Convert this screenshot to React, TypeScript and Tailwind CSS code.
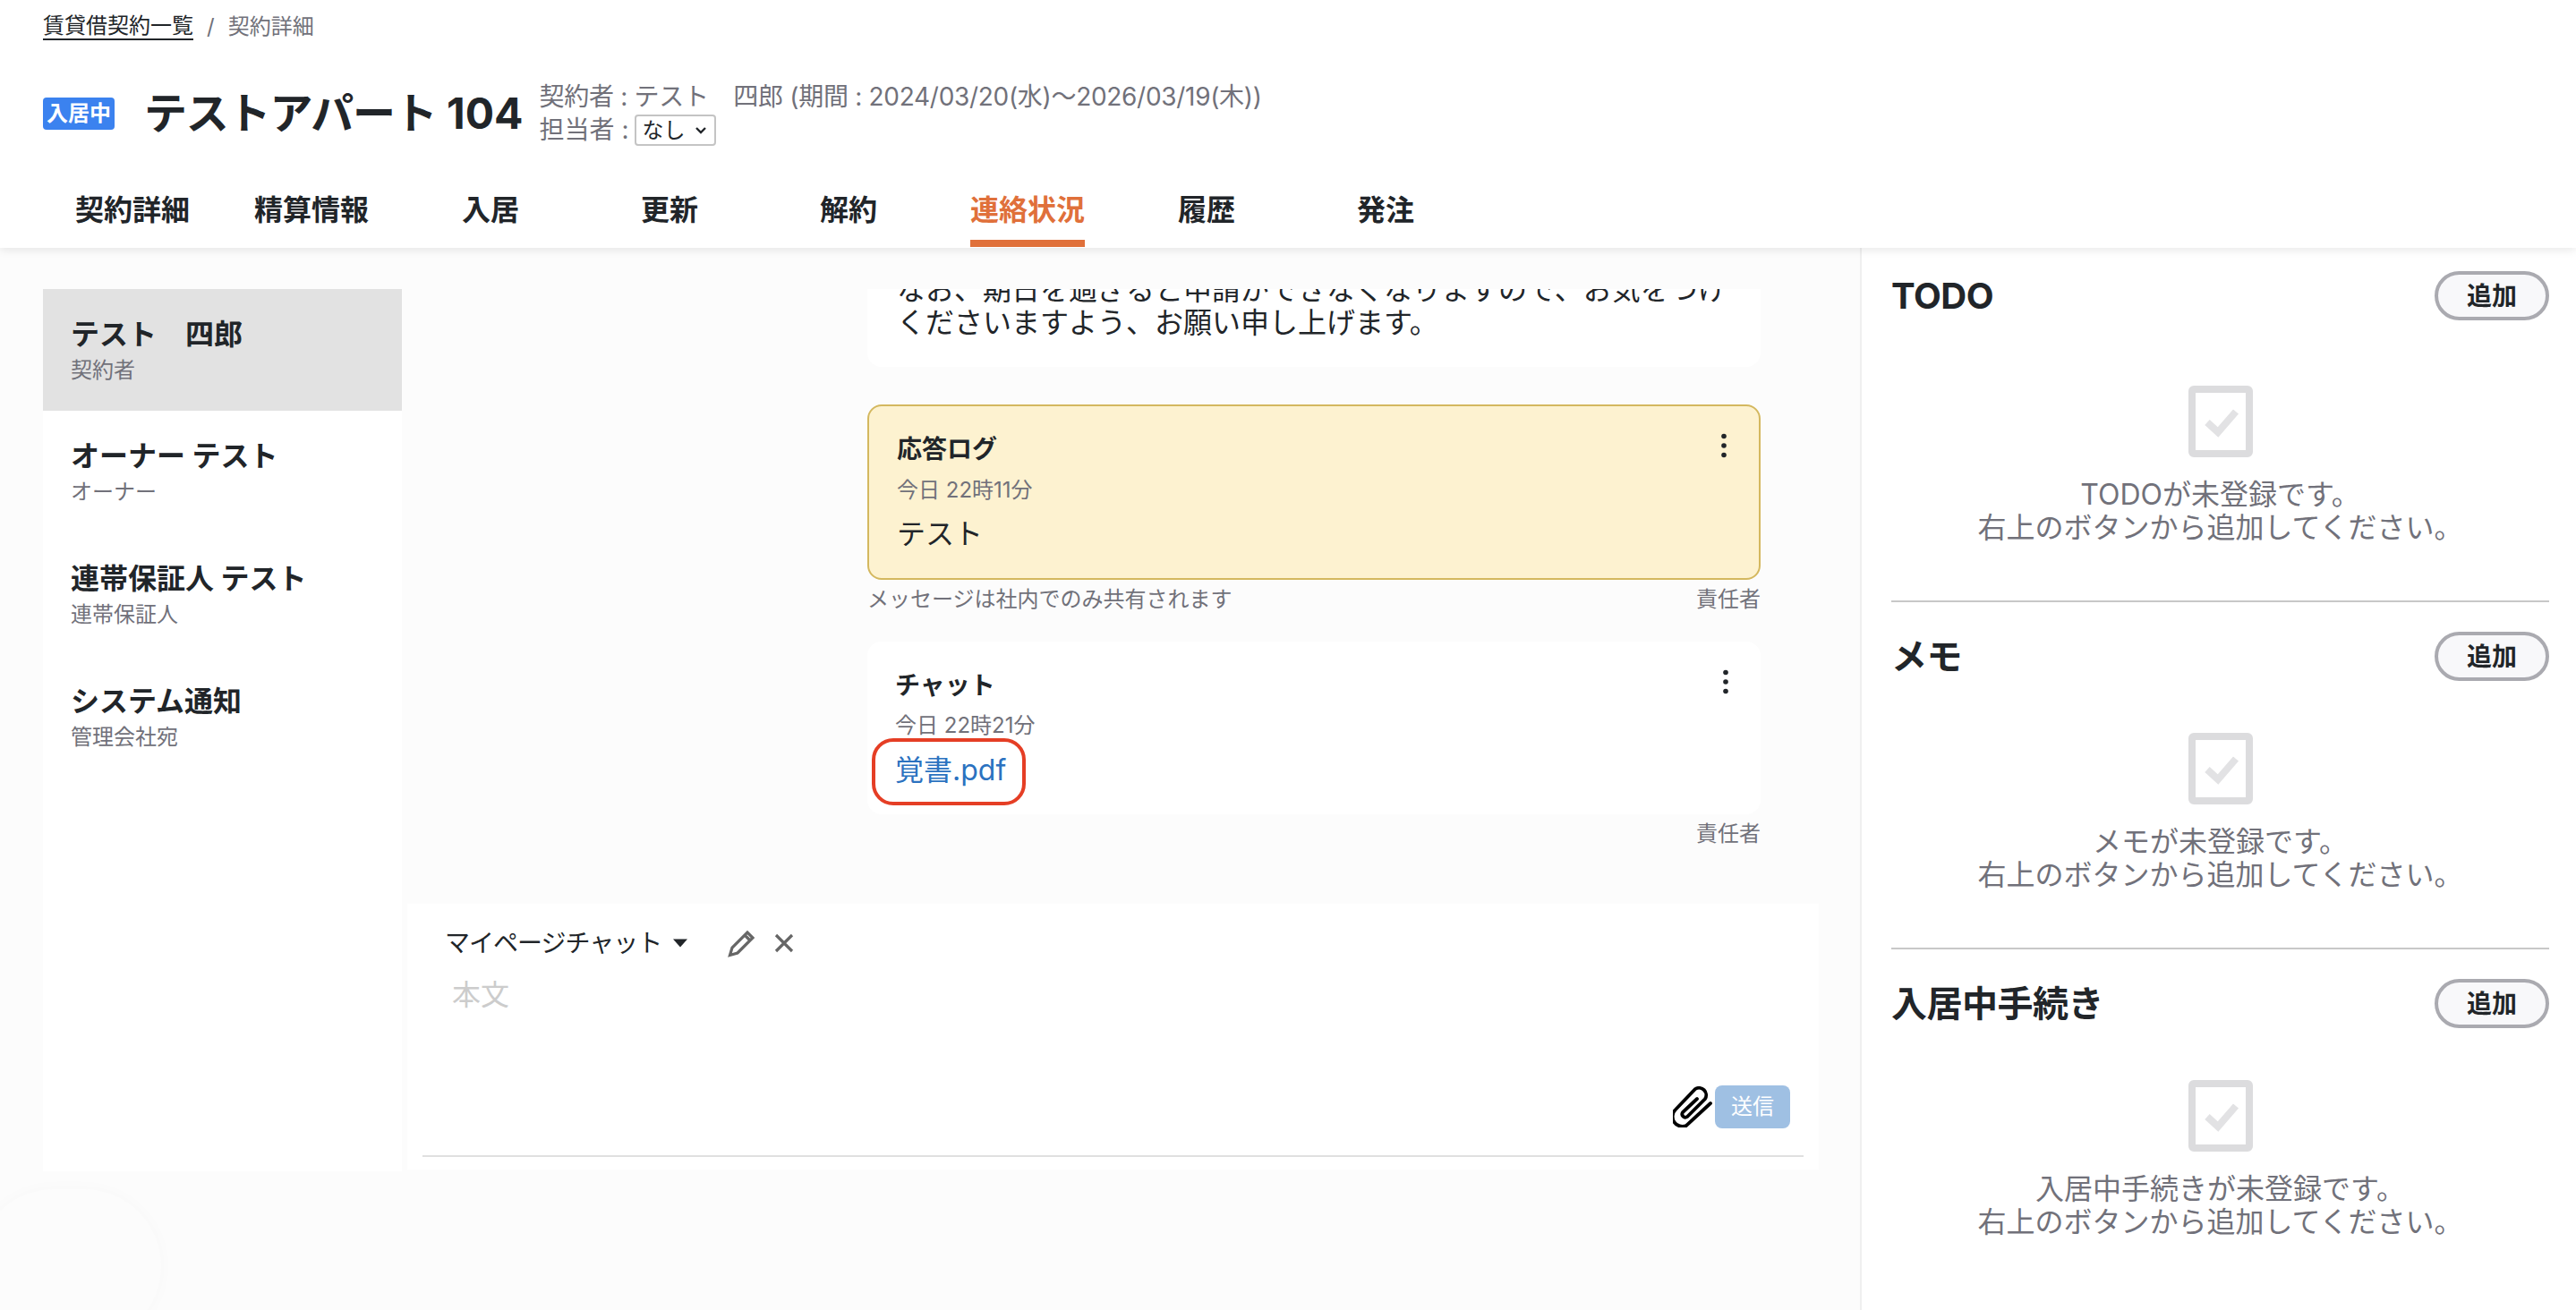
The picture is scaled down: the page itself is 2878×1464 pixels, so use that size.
import React from "react";

const tabs = ["契約詳細", "精算情報", "入居", "更新", "解約", "連絡状況", "履歴", "発注"];
const people = [
  ["テスト　四郎", "契約者"],
  ["オーナー テスト", "オーナー"],
  ["連帯保証人 テスト", "連帯保証人"],
  ["システム通知", "管理会社宛"],
];

function Dots() {
  return (
    <svg width="8" height="28" viewBox="0 0 8 28" className="text-[#212529]">
      <circle cx="4" cy="3.5" r="2.8" fill="currentColor" />
      <circle cx="4" cy="14" r="2.8" fill="currentColor" />
      <circle cx="4" cy="24.5" r="2.8" fill="currentColor" />
    </svg>
  );
}

function EmptyIcon() {
  return (
    <svg width="72" height="80" viewBox="0 0 72 80" className="block">
      <rect x="4" y="4" width="64" height="72" rx="2" fill="none" stroke="#dcdcde" strokeWidth="8" />
      <path d="M21 41 L33 52 L53 29" fill="none" stroke="#e2e2e4" strokeWidth="8" />
    </svg>
  );
}

function Section({ title, first, last }: { title: string; first?: boolean; last?: boolean }) {
  return (
    <section className={first ? "pt-[26px]" : "pt-[33px]"}>
      <div className="flex h-[55px] items-center justify-between">
        <h2 className="text-[40px] leading-[48px] font-bold tracking-[-0.5px] text-[#212529]">{title}</h2>
        <button className="h-[55px] w-[128px] rounded-full border-4 border-[#aaaab0] bg-[#f8f8fa] text-[28px] leading-[34px] font-bold text-[#212529]">
          追加
        </button>
      </div>
      <div className={`flex flex-col items-center ${first ? "pt-[73px]" : "pt-[58px]"} ${last ? "" : "pb-[63px]"}`}>
        <EmptyIcon />
        <p className="mt-[23px] text-center text-[32px] leading-[37px] text-[#71717a]">
          {title}が未登録です。
          <br />
          右上のボタンから追加してください。
        </p>
      </div>
      {!last && <div className="h-[2px] bg-[#c8c8c8]" />}
    </section>
  );
}

export default function App() {
  return (
    <div className="relative flex h-[1464px] flex-col overflow-hidden bg-[#fcfcfc] text-[#212529] [font-family:'Inter','Noto_Sans_CJK_JP',sans-serif]">
      <header className="relative z-10 h-[277px] shrink-0 bg-white pl-[48px] pt-[13px] shadow-[0_2px_10px_rgba(0,0,0,0.1)]">
        <nav className="flex items-center text-[24px] leading-[34px]">
          <a className="border-b-2 border-[#212529] leading-[28px]">賃貸借契約一覧</a>
          <span className="mx-[15px] text-[#71717a]">/</span>
          <span className="text-[#71717a]">契約詳細</span>
        </nav>
        <div className="mt-[43px] flex h-[74px] items-center">
          <span className="rounded-[4px] bg-[#3b82ef] px-[4px] text-[24px] leading-[36px] font-bold text-white">入居中</span>
          <h1 className="ml-[33px] text-[48px] leading-[60px] font-bold whitespace-nowrap">
            <span className="tracking-[-1.2px]">テストアパート</span> 104
          </h1>
          <div className="ml-[18px] text-[28px] leading-[37px] text-[#71717a]">
            <div className="tracking-[-0.3px]">契約者 : テスト　四郎 (期間 : 2024/03/20(水)〜2026/03/19(木))</div>
            <div className="flex items-center">
              担当者 :
              <div className="relative ml-[6px]">
                <select className="block h-[35px] w-[91px] appearance-none rounded-[4px] border-2 border-[#c4c4c4] bg-white pl-[7px] text-[24px] leading-[28px] text-[#212529]">
                  <option>なし</option>
                </select>
                <svg width="14" height="10" viewBox="0 0 14 10" className="pointer-events-none absolute right-[10px] top-[13px]">
                  <path d="M2 2 L7 7 L12 2" fill="none" stroke="#212529" strokeWidth="2.4" />
                </svg>
              </div>
            </div>
          </div>
        </div>
        <div className="mt-[48px] flex">
          {tabs.map((t) => (
            <div key={t} className="flex w-[200px] justify-center">
              <span
                className={
                  t === "連絡状況"
                    ? "border-b-8 border-[#e0703a] pb-[10px] text-[32px] leading-[46px] font-bold text-[#e0703a]"
                    : "pb-[18px] text-[32px] leading-[46px] font-bold"
                }
              >
                {t}
              </span>
            </div>
          ))}
        </div>
      </header>

      <main className="flex min-h-0 flex-1">
        <aside className="ml-[48px] mt-[46px] h-[986px] w-[401px] shrink-0 bg-white">
          {people.map(([name, sub], i) => (
            <div key={name} className={`pl-[31px] pt-[31px] ${i === 0 ? "h-[136px] bg-[#e2e2e2]" : "h-[137px]"}`}>
              <div className="text-[32px] leading-[40px] font-bold whitespace-pre">{name}</div>
              <div className="mt-[3px] text-[24px] leading-[34px] text-[#71717a]">{sub}</div>
            </div>
          ))}
        </aside>

        <div className="ml-[6px] w-[1577px] shrink-0">
          <div className="mt-[46px] flex h-[687px] flex-col justify-end overflow-hidden pl-[514px] pr-[65px] pb-[61px]">
            <div className="shrink-0 rounded-[16px] bg-white pb-[31px] pl-[33px] pr-[30px] text-[32px] leading-[37px]">
              なお、期日を過ぎると申請ができなくなりますので、お気をつけくださいますよう、お願い申し上げます。
            </div>
            <div className="mt-[42px] h-[196px] shrink-0 rounded-[16px] border-2 border-[#d4b85f] bg-[#fdf2d0] pl-[31px] pr-[35px] pt-[30px]">
              <div className="flex justify-between">
                <div className="text-[28px] leading-[36px] font-bold">応答ログ</div>
                <Dots />
              </div>
              <div className="mt-[10px] text-[24px] leading-[36px] text-[#71717a]">今日 22時11分</div>
              <div className="mt-[12px] text-[32px] leading-[37px]">テスト</div>
            </div>
            <div className="flex justify-between pt-[5px] text-[24px] leading-[34px] text-[#71717a]">
              <span>メッセージは社内でのみ共有されます</span>
              <span>責任者</span>
            </div>
            <div className="relative mt-[30px] h-[193px] shrink-0 rounded-[16px] bg-white pl-[31px] pr-[35px] pt-[31px]">
              <div className="flex justify-between">
                <div className="text-[28px] leading-[36px] font-bold">チャット</div>
                <Dots />
              </div>
              <div className="mt-[9px] text-[24px] leading-[36px] text-[#71717a]">今日 22時21分</div>
              <a className="mt-[13px] block text-[32px] leading-[37px] text-[#2b72c0]">覚書.pdf</a>
              <div className="absolute left-[5px] top-[108px] h-[75px] w-[172px] rounded-[24px] border-4 border-[#e53e25]" />
            </div>
            <div className="flex justify-end pt-[5px] text-[24px] leading-[34px] text-[#71717a]">
              <span>責任者</span>
            </div>
          </div>

          <div className="h-[297px] bg-white pt-[24px]">
            <div className="flex h-[40px] items-center pl-[42px]">
              <span className="text-[28px] leading-[40px] tracking-[-1px]">マイページチャット</span>
              <svg width="16" height="10" viewBox="0 0 16 10" className="ml-[13px] text-[#212529]">
                <path d="M0 0.5 H16 L8 9.5 Z" fill="currentColor" />
              </svg>
              <svg width="32" height="32" viewBox="0 0 32 32" className="ml-[45px]">
                <path d="M2.5 29.5 L5 21 L22 4 L28 10 L11 27 Z M19 7 L25 13" fill="none" stroke="#666666" strokeWidth="3.2" strokeLinejoin="miter" />
              </svg>
              <svg width="24" height="24" viewBox="0 0 24 24" className="ml-[19px]">
                <path d="M3 3 L21 21 M21 3 L3 21" fill="none" stroke="#666666" strokeWidth="3.2" />
              </svg>
            </div>
            <div className="pl-[50px] pr-[32px] pt-[18px]">
              <textarea
                placeholder="本文"
                className="block h-[121px] w-full resize-none bg-transparent text-[32px] leading-[40px] outline-none placeholder:text-[#cccccc]"
              />
            </div>
            <div className="flex items-center justify-end pr-[32px]">
              <svg width="44" height="46" viewBox="0 0 44 46" className="mr-[3px]">
                <path
                  d="M42 19 L15 44 A11 11 0 0 1 3 26 L25 3 A8 8 0 0 1 36 14 L16 34 A3.6 3.6 0 0 1 11 29 L27 14"
                  fill="none"
                  stroke="#000000"
                  strokeWidth="3.8"
                  strokeLinecap="round"
                />
              </svg>
              <button className="h-[48px] w-[84px] rounded-[8px] bg-[#9fc0e3] text-[24px] leading-[30px] text-white">送信</button>
            </div>
            <div className="mx-[17px] mt-[30px] h-[2px] bg-[#e0e0e0]" />
          </div>
        </div>

        <aside className="ml-auto w-[800px] shrink-0 border-l-2 border-[#f0f0f0] bg-white pl-[33px] pr-[30px]">
          <Section title="TODO" first />
          <Section title="メモ" />
          <Section title="入居中手続き" last />
        </aside>
      </main>

      <div className="absolute -left-[26px] top-[1329px] h-[172px] w-[206px] rounded-full bg-[#fcfcfc] shadow-[0_0_18px_rgba(0,0,0,0.025)]" />
    </div>
  );
}
